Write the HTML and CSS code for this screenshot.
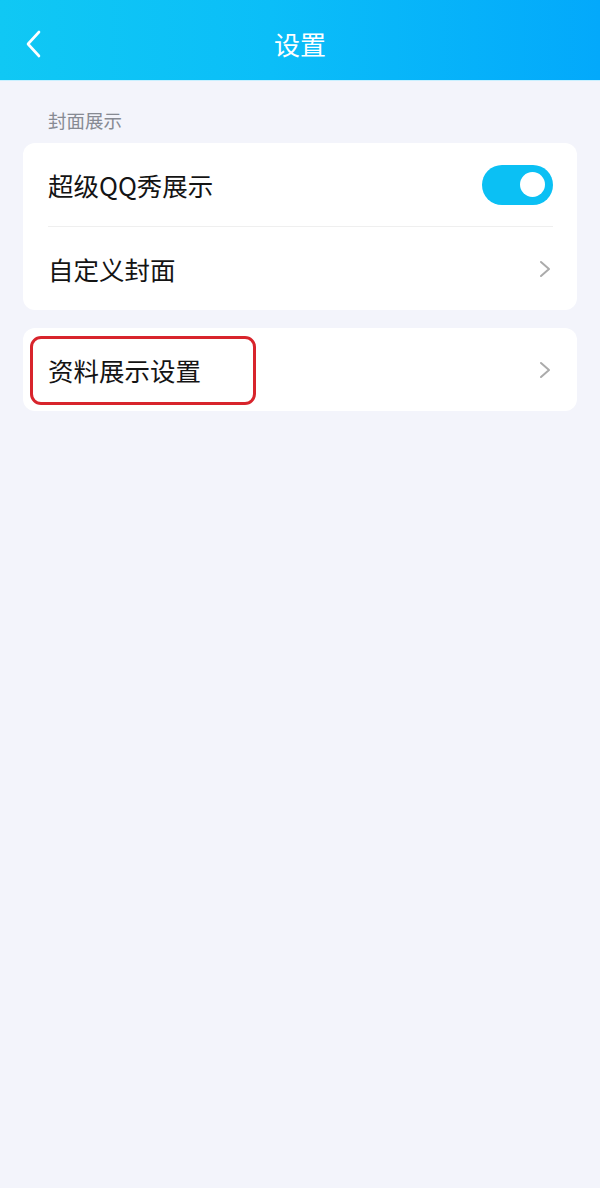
FILE: index.html
```html
<!DOCTYPE html>
<html lang="zh-CN">
<head>
<meta charset="utf-8">
<title>设置</title>
<link rel="stylesheet" href="styles.css">
</head>
<body>
<div class="page">
  <header class="topbar">
    <div class="back">
      <svg width="16" height="28" viewBox="0 0 16 28"><polyline points="14,2 3,14 14,26" fill="none" stroke="#ffffff" stroke-width="2.6" stroke-linecap="round" stroke-linejoin="round"/></svg>
    </div>
    <div class="title">设置</div>
    <div class="spacer"></div>
  </header>

  <div class="section-label">封面展示</div>

  <div class="card">
    <div class="row">
      <span class="row-text">超级QQ秀展示</span>
      <div class="toggle"><div class="knob"></div></div>
    </div>
    <div class="divider"></div>
    <div class="row">
      <span class="row-text">自定义封面</span>
      <svg class="chev" width="12" height="18" viewBox="0 0 12 18"><polyline points="2,2 10,9 2,16" fill="none" stroke="#ababab" stroke-width="2" stroke-linecap="round" stroke-linejoin="round"/></svg>
    </div>
  </div>

  <div class="card card-second">
    <div class="row">
      <span class="row-text">资料展示设置</span>
      <svg class="chev" width="12" height="18" viewBox="0 0 12 18"><polyline points="2,2 10,9 2,16" fill="none" stroke="#ababab" stroke-width="2" stroke-linecap="round" stroke-linejoin="round"/></svg>
    </div>
    <div class="highlight"></div>
  </div>
</div>
</body>
</html>
```

FILE: styles.css
```css
* { box-sizing: border-box; }
html, body { margin: 0; padding: 0; }
body {
  width: 600px;
  height: 1188px;
  background: #f3f4fb;
  font-family: "Noto Sans CJK SC", "Noto Sans", sans-serif;
  color: #141414;
}
.page { width: 600px; min-height: 1188px; background: #f3f4fb; }

.topbar {
  height: 81px;
  display: grid;
  grid-template-columns: 80px 1fr 80px;
  align-items: center;
  padding-top: 8px;
  background: linear-gradient(90deg, #10c8f4 0%, #0bbef8 45%, #03a9fb 100%);
  border-bottom: 1px solid #c9f0ff;
}
.back { padding-left: 25px; display: flex; align-items: center; height: 28px; }
.back svg { display: block; }
.title {
  text-align: center;
  color: #ffffff;
  font-size: 26px;
  line-height: 30px;
}

.section-label {
  margin: 26px 0 10px;
  padding-left: 48px;
  font-size: 18.5px;
  line-height: 26px;
  color: #878a93;
}

.card {
  margin: 0 23px;
  background: #ffffff;
  border-radius: 12px;
}
.card-second {
  margin-top: 18px;
  position: relative;
}
.row {
  height: 83px;
  display: flex;
  align-items: center;
  justify-content: space-between;
  padding: 0 26px 0 25px;
}
.row-text { font-size: 25.5px; line-height: 30px; }

.divider {
  height: 1px;
  margin: 0 24px 0 25px;
  background: #efefef;
}

.toggle {
  width: 71px;
  height: 40px;
  border-radius: 20px;
  background: #0bc0f4;
  display: flex;
  align-items: center;
  justify-content: flex-end;
  padding-right: 8px;
  margin-right: -2px;
}
.knob {
  width: 25px;
  height: 25px;
  border-radius: 50%;
  background: #ffffff;
}
.chev { display: block; }

.highlight {
  position: absolute;
  left: 7px;
  top: 8px;
  width: 226px;
  height: 69px;
  border: 3px solid #d8242c;
  border-radius: 11px;
}
```
